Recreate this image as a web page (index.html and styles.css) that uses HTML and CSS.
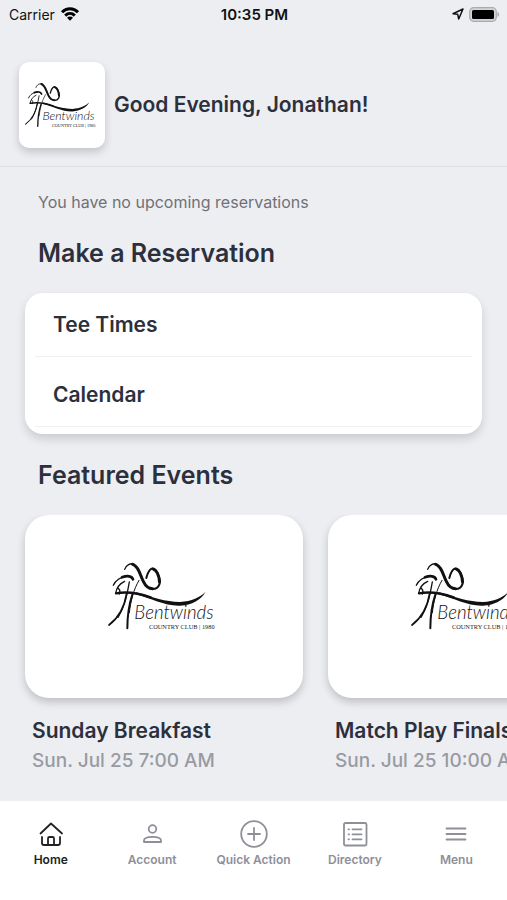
FILE: index.html
```html
<!DOCTYPE html>
<html lang="en">
<head>
  <meta charset="UTF-8">
  <meta name="viewport" content="width=device-width, initial-scale=1.0">
  <title>Bentwinds Country Club</title>
  <link rel="stylesheet" href="styles.css">
</head>
<body>
<!-- wind-blown tree from the club logo, shared by the header and the event cards -->
<svg class="defs" width="0" height="0" aria-hidden="true">
  <g id="club-tree">
    <g fill="none" stroke="#111" stroke-linecap="round" stroke-linejoin="round">
      <path stroke-width="4" d="M104 58C108 45 122 38 133 43"/>
      <path stroke-width="9" d="M128 43C146 48 150 75 160 94C166 107 176 116 188 116"/>
      <path stroke-width="6" d="M188 117C205 118 214 100 208 82C203 66 194 54 185 56C177 60 172 72 169 84"/>
      <path stroke-width="8" d="M189 57C200 62 207 78 208 96"/>
      <path stroke-width="4" d="M70 106C76 91 94 79 110 79"/>
      <path stroke-width="8" d="M96 82C112 76 126 78 129 88"/>
      <path stroke-width="4" d="M104 94C90 100 80 112 77 130"/>
      <path stroke-width="7" d="M78 130C110 124 148 130 182 142"/>
      <path stroke-width="4" d="M84 115C89 117 91 123 88 132"/>
      <path stroke-width="4" d="M118 96C112 134 101 175 84 202"/>
      <path stroke-width="5" d="M110 130C104 168 86 203 57 225"/>
      <path stroke-width="3" d="M147 91C130 120 122 154 118 188"/>
      <path stroke-width="6" d="M127 134C117 164 112 205 112 235"/>
    </g>
    <path fill="#111" d="M138 127C190 142 225 156 270 156C305 154 330 142 346 126C335 148 305 166 270 167C225 169 185 145 136 133Z"/>
  </g>
</svg>

<div class="container">
  <div class="status-bar">
    <div class="carrier">
      <span>Carrier</span>
      <svg width="20" height="16" viewBox="0 0 20 16" aria-hidden="true">
        <g fill="none" stroke="#000" stroke-width="3">
          <path d="M2 6.2C6.5 1.6 13.5 1.6 18 6.2"/>
          <path d="M5.2 9.6C8 6.9 12 6.9 14.800 9.600"/>
        </g>
        <path d="M7 11.7C8.7 10.1 11.3 10.1 13 11.7L10 14.7Z"/>
      </svg>
    </div>
    <div class="time">10:35 PM</div>
    <div class="battery">
      <svg width="12" height="12" viewBox="0 0 12 12" aria-hidden="true">
        <path d="M1 5.7L11 1L6.7 11L5.7 6.3Z" fill="none" stroke="#111" stroke-width="1.5" stroke-linejoin="round"/>
      </svg>
      <svg width="31" height="15" viewBox="0 0 31 15" aria-hidden="true">
        <rect x="0.7" y="0.7" width="26.6" height="13.6" rx="4" fill="#d4d5d6" stroke="#a9abad" stroke-width="1.2"/>
        <rect x="3" y="3" width="22" height="9" rx="1.5"/>
        <path d="M28.5 5C30.7 6 30.7 9 28.5 10Z" fill="#a9abad"/>
      </svg>
    </div>
  </div>

  <header class="header">
    <div class="club-badge">
      <svg class="logo badge-logo" viewBox="54 30 336 216">
        <use href="#club-tree"/>
        <text class="logo-name" x="133" y="208">Bentwinds</text>
        <text class="logo-sub" x="177" y="236">COUNTRY CLUB | 1980</text>
      </svg>
    </div>
    <h1>Good Evening, Jonathan!</h1>
  </header>

  <main class="main">
    <p class="notice">You have no upcoming reservations</p>

    <section>
      <h2>Make a Reservation</h2>
      <ul class="reservation-list">
        <li><a href="#">Tee Times</a></li>
        <li><a href="#">Calendar</a></li>
      </ul>
    </section>

    <section>
      <h2>Featured Events</h2>
      <div class="events">
        <article class="event">
          <div class="event-card">
            <svg class="logo event-logo" viewBox="54 30 336 216">
              <use href="#club-tree"/>
              <text class="logo-name" x="133" y="208">Bentwinds</text>
              <text class="logo-sub" x="177" y="236">COUNTRY CLUB | 1980</text>
            </svg>
          </div>
          <h3>Sunday Breakfast</h3>
          <p>Sun. Jul 25 7:00 AM</p>
        </article>
        <article class="event">
          <div class="event-card">
            <svg class="logo event-logo" viewBox="54 30 336 216">
              <use href="#club-tree"/>
              <text class="logo-name" x="133" y="208">Bentwinds</text>
              <text class="logo-sub" x="177" y="236">COUNTRY CLUB | 1980</text>
            </svg>
          </div>
          <h3>Match Play Finals</h3>
          <p>Sun. Jul 25 10:00 AM</p>
        </article>
      </div>
    </section>
  </main>

  <nav class="tab-bar">
    <a class="tab active" href="#">
      <svg viewBox="0 0 28 28" aria-hidden="true">
        <path d="M3.5 13.500L14 3.500L25 13.500M5 17V23Q5 25 7 25H21Q23 25 23 23V17M11 25V18.500Q11 17 12.500 17H15.500Q17 17 17 18.500V25"/>
      </svg>
      <span>Home</span>
    </a>
    <a class="tab" href="#">
      <svg viewBox="0 0 28 28" aria-hidden="true">
        <circle cx="14.500" cy="9" r="3.800"/>
        <path d="M6 22V20.500C6 18 9.500 16.800 14.500 16.800S23 18 23 20.500V22Z"/>
      </svg>
      <span>Account</span>
    </a>
    <a class="tab" href="#">
      <svg viewBox="0 0 28 28" aria-hidden="true">
        <circle cx="14" cy="14" r="12.800"/>
        <path d="M14 8V20M8 14H20"/>
      </svg>
      <span>Quick Action</span>
    </a>
    <a class="tab" href="#">
      <svg viewBox="0 0 28 28" aria-hidden="true">
        <rect x="3" y="3" width="22.500" height="22.500" rx="1.500"/>
        <path d="M11.500 9.300H20.500M11.500 14.300H20.500M11.500 19.300H20.500M7.500 9.300H8M7.500 14.300H8M7.500 19.300H8"/>
      </svg>
      <span>Directory</span>
    </a>
    <a class="tab" href="#">
      <svg viewBox="0 0 28 28" aria-hidden="true">
        <path d="M4.500 8.500H23.500M4.500 14H23.500M4.500 19.500H23.500"/>
      </svg>
      <span>Menu</span>
    </a>
  </nav>
</div>
</body>
</html>
```

FILE: styles.css
```css
* {
  box-sizing: border-box;
}
body {
  margin: 0;
  background-color: #edeef2;
  color: #2c303d;
  font-family: Inter, "Liberation Sans", sans-serif;
}
h1,
h2,
h3,
p,
ul {
  margin: 0;
  padding: 0;
}
a {
  color: inherit;
  text-decoration: none;
}
.defs {
  position: absolute;
}
.container {
  display: flex;
  flex-direction: column;
  min-height: 100vh;
}

/* Status bar */
.status-bar {
  display: grid;
  grid-template-columns: 1fr auto 1fr;
  align-items: center;
  height: 28px;
  padding: 0 7px 0 9px;
  color: #111;
  font-size: 14px;
}
.carrier,
.battery {
  display: flex;
  align-items: center;
  gap: 5px;
}
.battery {
  justify-content: flex-end;
}
.time {
  font-size: 15px;
  font-weight: 600;
}

/* Header */
.header {
  display: flex;
  align-items: center;
  gap: 9px;
  padding: 34px 19px 18px;
  border-bottom: 1px solid #dddfe3;
}
.club-badge {
  display: flex;
  align-items: center;
  justify-content: center;
  width: 86px;
  height: 86px;
  border-radius: 10px;
  background-color: #fff;
  box-shadow: 0 4px 8px rgba(0, 0, 0, 0.18);
}
.header h1 {
  font-size: 21px;
  font-weight: 600;
  line-height: 28px;
}

/* Club logo */
.logo {
  overflow: visible;
}
.badge-logo {
  width: 74px;
  height: 48px;
}
.event-logo {
  width: 112px;
  height: 72px;
}
.logo-name {
  font-family: Lato, sans-serif;
  font-size: 56px;
  font-style: italic;
  font-weight: 300;
  fill: #111;
}
.logo-sub {
  font-family: "Liberation Serif", serif;
  font-size: 19px;
  fill: #222;
}

/* Content */
.main {
  flex: 1;
  padding-top: 25px;
}
.notice {
  padding: 0 38px;
  color: #707176;
  font-size: 16px;
  line-height: 20px;
}
.main h2 {
  padding: 25px 38px 24px;
  font-size: 25px;
  font-weight: 600;
  line-height: 32px;
}
.reservation-list {
  margin: 0 25px;
  padding: 0 10px 1px;
  border-radius: 18px;
  background-color: #fff;
  box-shadow: 0 5px 10px rgba(0, 0, 0, 0.14);
  list-style: none;
}
.reservation-list li {
  padding-bottom: 6px;
}
.reservation-list a {
  display: block;
  padding: 18px 18px 17px;
  border-bottom: 1px solid #f0f0f1;
  font-size: 21px;
  font-weight: 600;
  line-height: 28px;
}
.events {
  display: flex;
  gap: 25px;
  padding: 0 25px 25px;
  overflow-x: auto;
  scrollbar-width: none;
}
.event {
  flex: 0 0 278px;
}
.event-card {
  display: flex;
  justify-content: center;
  height: 183px;
  padding-top: 45px;
  border-radius: 24px;
  background-color: #fff;
  box-shadow: 0 4px 8px rgba(0, 0, 0, 0.2);
}
.event h3 {
  padding: 19px 7px 0;
  font-size: 21px;
  font-weight: 600;
  line-height: 28px;
  white-space: nowrap;
}
.event p {
  padding: 4px 7px 0;
  color: #989ba2;
  font-size: 19px;
  font-weight: 500;
  line-height: 24px;
  white-space: nowrap;
}

/* Tab bar */
.tab-bar {
  display: flex;
  height: 99px;
  padding-top: 19px;
  background-color: #fff;
}
.tab {
  display: flex;
  flex: 1;
  flex-direction: column;
  align-items: center;
  gap: 4px;
  color: #8e8f98;
  font-size: 12px;
  font-weight: 600;
  line-height: 16px;
  white-space: nowrap;
}
.tab svg {
  width: 28px;
  height: 28px;
  fill: none;
  stroke: currentColor;
  stroke-width: 1.8;
  stroke-linecap: round;
  stroke-linejoin: round;
}
.tab.active {
  color: #222;
}
```
